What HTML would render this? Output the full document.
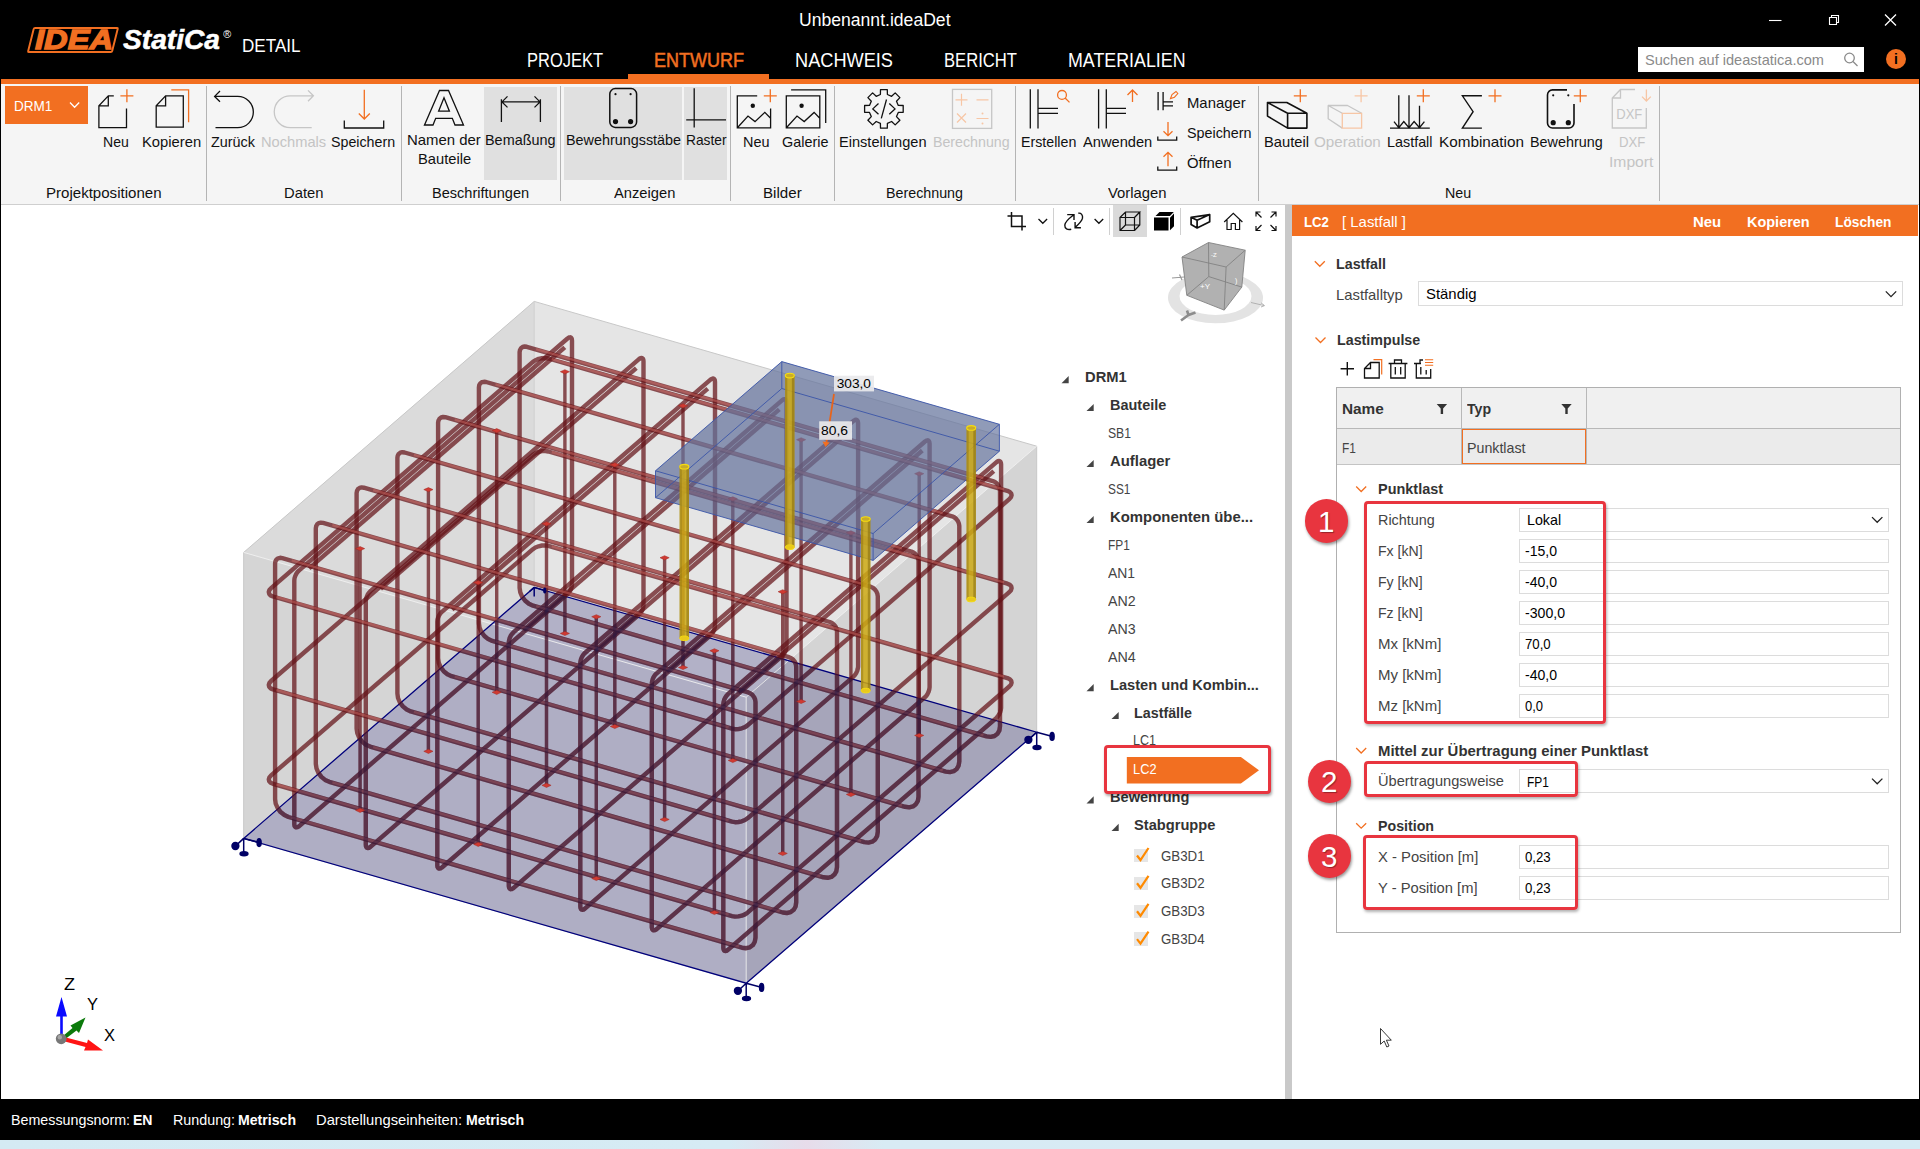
<!DOCTYPE html>
<html lang="de"><head><meta charset="utf-8"><title>IDEA StatiCa Detail</title>
<style>
html,body{margin:0;padding:0;background:#fff;}
body{width:1920px;height:1149px;position:relative;overflow:hidden;font-family:"Liberation Sans",sans-serif;}
.b{position:absolute;display:block;}
.t{position:absolute;display:block;white-space:nowrap;transform-origin:0 50%;}
svg{overflow:visible}
</style></head><body>
<div class="b" style="left:0px;top:205.3px;width:1920px;height:894px;background:#fff;"></div>
<div class="b" style="left:1285px;top:205.3px;width:7px;height:894px;background:#c9c9c9;"></div>
<div class="b" style="left:0px;top:1099px;width:1920px;height:41px;background:#000;"></div>
<div class="b" style="left:0px;top:1140px;width:1920px;height:9px;background:linear-gradient(90deg,#d4eaf3 0%,#d6ebf4 38%,#e7dcea 42%,#d8ebf4 46%,#d5ebf4 100%);"></div>
<span class="t" style="left:11.00px;top:1109.60px;height:20px;line-height:20px;font-size:15px;color:#fff;transform:scaleX(0.9516);">Bemessungsnorm:</span>
<span class="t" style="left:133.00px;top:1109.60px;height:20px;line-height:20px;font-size:15px;color:#fff;font-weight:bold;transform:scaleX(0.9358);">EN</span>
<span class="t" style="left:173.00px;top:1109.60px;height:20px;line-height:20px;font-size:15px;color:#fff;transform:scaleX(0.9531);">Rundung:</span>
<span class="t" style="left:237.50px;top:1109.60px;height:20px;line-height:20px;font-size:15px;color:#fff;font-weight:bold;transform:scaleX(0.9403);">Metrisch</span>
<span class="t" style="left:316.00px;top:1109.60px;height:20px;line-height:20px;font-size:15px;color:#fff;transform:scaleX(0.9837);">Darstellungseinheiten:</span>
<span class="t" style="left:465.50px;top:1109.60px;height:20px;line-height:20px;font-size:15px;color:#fff;font-weight:bold;transform:scaleX(0.9403);">Metrisch</span>
<svg class="b" style="left:0;top:0" width="1920" height="1149" viewBox="0 0 1920 1149"><polygon points="243.7,838.4 746.2,983.2 1036.7,732.2 1036.7,446.2 534.2,301.4 243.7,552.4" fill="#e5e5e5"/><polygon points="243.7,838.4 534.2,587.4 534.2,301.4 243.7,552.4" fill="#dbdbdb"/><polygon points="243.7,838.4 746.2,983.2 746.2,697.2 243.7,552.4" fill="rgba(0,0,0,0.025)"/><polygon points="746.2,983.2 1036.7,732.2 1036.7,446.2 746.2,697.2" fill="rgba(0,0,0,0.075)"/><polygon points="243.7,838.4 746.2,983.2 1036.7,732.2 534.2,587.4" fill="rgba(128,126,170,0.5)"/><path d="M243.7 838.4L746.2 983.2L1036.7 732.2L1036.7 446.2L534.2 301.4L243.7 552.4Z" stroke="#c8c8c8" stroke-width="1" fill="none"/><path d="M534.2 587.4L534.2 301.4" stroke="#cdcdcd" stroke-width="0.8" fill="none"/><path d="M243.7 552.4L746.2 697.2L1036.7 446.2M746.2 697.2L746.2 983.2" stroke="#f0f0f0" stroke-width="0.9" fill="none"/><polygon points="243.7,838.4 746.2,983.2 1036.7,732.2 534.2,587.4" fill="none" stroke="#00007c" stroke-width="1.3"/><polygon points="746.2,983.2 1036.7,732.2 785.0,659.3 746.2,697.2" fill="rgba(0,0,10,0.025)"/><defs><g id="bars" fill="none" stroke-linejoin="round"><path d="M275.1 799.1L275.7 803.7L277.7 808.1L280.6 812.1L284.4 815.1L288.5 817.0L742.0 947.7L746.2 948.2L749.9 947.3L752.9 945.1L754.8 941.7L755.5 937.6L755.5 702.0L755.1 699.5L754.1 697.2L752.5 695.0L750.5 693.4L748.3 692.4L282.3 558.1L280.1 557.8L278.1 558.3L276.5 559.5L275.4 561.3L275.1 563.5Z"/><path d="M315.8 763.9L316.5 768.4L318.4 772.9L321.4 776.9L325.1 779.9L329.3 781.8L782.8 912.5L786.9 913.0L790.7 912.1L793.7 909.8L795.6 906.5L796.2 902.4L796.2 666.7L795.9 664.3L794.9 661.9L793.3 659.8L791.3 658.2L789.0 657.2L323.1 522.9L320.8 522.6L318.8 523.1L317.2 524.3L316.2 526.1L315.8 528.3Z"/><path d="M356.6 728.7L357.3 733.2L359.2 737.7L362.1 741.6L365.9 744.7L370.1 746.6L823.5 877.3L827.7 877.8L831.4 876.9L834.4 874.6L836.3 871.3L837.0 867.1L837.0 631.5L836.6 629.1L835.6 626.7L834.0 624.6L832.0 623.0L829.8 622.0L363.8 487.7L361.6 487.4L359.6 487.9L358.0 489.1L357.0 490.9L356.6 493.1Z"/><path d="M397.4 693.5L398.0 698.0L399.9 702.5L402.9 706.4L406.7 709.5L410.8 711.4L864.3 842.1L868.5 842.6L872.2 841.7L875.2 839.4L877.1 836.1L877.8 831.9L877.8 596.3L877.4 593.9L876.4 591.5L874.8 589.4L872.8 587.7L870.5 586.7L404.6 452.5L402.3 452.2L400.3 452.7L398.7 453.9L397.7 455.7L397.4 457.9Z"/><path d="M438.1 658.3L438.8 662.8L440.7 667.3L443.7 671.2L447.4 674.3L451.6 676.2L905.1 806.8L909.2 807.4L913.0 806.4L915.9 804.2L917.9 800.9L918.5 796.7L918.5 561.1L918.2 558.7L917.1 556.3L915.5 554.2L913.5 552.5L911.3 551.5L445.3 417.2L443.1 417.0L441.1 417.5L439.5 418.7L438.5 420.5L438.1 422.7Z"/><path d="M478.9 623.1L479.5 627.6L481.4 632.0L484.4 636.0L488.2 639.1L492.3 640.9L945.8 771.6L950.0 772.1L953.7 771.2L956.7 769.0L958.6 765.6L959.3 761.5L959.3 525.9L958.9 523.5L957.9 521.1L956.3 519.0L954.3 517.3L952.1 516.3L486.1 382.0L483.9 381.8L481.8 382.2L480.3 383.4L479.2 385.2L478.9 387.5Z"/><path d="M519.6 587.9L520.3 592.4L522.2 596.8L525.2 600.8L528.9 603.8L533.1 605.7L986.6 736.4L990.7 736.9L994.5 736.0L997.5 733.8L999.4 730.4L1000.0 726.3L1000.0 490.7L999.7 488.3L998.6 485.9L997.1 483.7L995.0 482.1L992.8 481.1L526.8 346.8L524.6 346.5L522.6 347.0L521.0 348.2L520.0 350.0L519.6 352.2Z"/><path d="M294.3 824.2L294.5 825.8L295.2 827.0L296.2 827.4L297.4 827.2L298.9 826.3L567.5 594.1L568.9 592.6L570.2 590.7L571.2 588.5L571.8 586.3L572.0 584.2L572.0 340.5L571.8 338.9L571.2 337.8L570.2 337.3L568.9 337.5L567.5 338.5L298.9 570.6L297.4 572.1L296.2 574.0L295.2 576.2L294.5 578.4L294.3 580.5Z"/><path d="M309.1 568.3L564.8 347.4"/><path d="M365.8 844.8L366.0 846.4L366.7 847.6L367.7 848.0L369.0 847.8L370.4 846.9L639.0 614.7L640.4 613.2L641.7 611.3L642.7 609.1L643.3 606.9L643.5 604.8L643.5 361.1L643.3 359.5L642.7 358.4L641.7 357.9L640.4 358.1L639.0 359.1L370.4 591.2L369.0 592.7L367.7 594.6L366.7 596.8L366.0 599.1L365.8 601.1Z"/><path d="M380.6 588.9L636.3 368.1"/><path d="M437.3 865.4L437.5 867.0L438.2 868.2L439.2 868.6L440.5 868.4L441.9 867.5L710.5 635.4L711.9 633.8L713.2 631.9L714.2 629.7L714.8 627.5L715.0 625.4L715.0 381.7L714.8 380.1L714.2 379.0L713.2 378.5L711.9 378.8L710.5 379.7L441.9 611.8L440.5 613.3L439.2 615.2L438.2 617.4L437.5 619.7L437.3 621.7Z"/><path d="M452.1 609.5L707.8 388.7"/><path d="M508.8 886.0L509.1 887.7L509.7 888.8L510.7 889.2L512.0 889.0L513.4 888.1L782.0 656.0L783.4 654.5L784.7 652.5L785.7 650.3L786.3 648.1L786.5 646.0L786.5 402.4L786.3 400.7L785.7 399.6L784.7 399.1L783.4 399.4L782.0 400.3L513.4 632.4L512.0 633.9L510.7 635.8L509.7 638.0L509.1 640.3L508.8 642.3Z"/><path d="M523.6 630.1L779.3 409.3"/><path d="M580.3 906.6L580.6 908.3L581.2 909.4L582.2 909.8L583.5 909.6L584.9 908.7L853.5 676.6L854.9 675.1L856.2 673.1L857.2 670.9L857.8 668.7L858.1 666.6L858.1 423.0L857.8 421.3L857.2 420.2L856.2 419.7L854.9 420.0L853.5 420.9L584.9 653.0L583.5 654.5L582.2 656.4L581.2 658.6L580.6 660.9L580.3 662.9Z"/><path d="M595.1 650.7L850.8 429.9"/><path d="M651.8 927.2L652.1 928.9L652.7 930.0L653.7 930.4L655.0 930.2L656.4 929.3L925.0 697.2L926.4 695.7L927.7 693.7L928.7 691.5L929.3 689.3L929.6 687.2L929.6 443.6L929.3 441.9L928.7 440.8L927.7 440.3L926.4 440.6L925.0 441.5L656.4 673.6L655.0 675.1L653.7 677.0L652.7 679.2L652.1 681.5L651.8 683.5Z"/><path d="M666.6 671.4L922.3 450.5"/><path d="M723.3 947.8L723.6 949.5L724.2 950.6L725.2 951.0L726.5 950.8L727.9 949.9L996.5 717.8L997.9 716.3L999.2 714.3L1000.2 712.1L1000.8 709.9L1001.1 707.9L1001.1 464.2L1000.8 462.5L1000.2 461.4L999.2 460.9L997.9 461.2L996.5 462.1L727.9 694.2L726.5 695.7L725.2 697.7L724.2 699.8L723.6 702.1L723.3 704.1Z"/><path d="M738.2 692.0L993.8 471.1"/><path d="M271.1 775.4L269.4 777.4L268.8 779.3L269.2 781.2L270.6 782.7L273.0 783.8L732.0 916.1L735.0 916.6L738.4 916.4L741.8 915.7L745.0 914.4L747.5 912.7L1009.3 686.5L1011.0 684.6L1011.6 682.6L1011.2 680.7L1009.8 679.2L1007.4 678.1L548.4 545.8L545.4 545.4L542.0 545.5L538.6 546.3L535.4 547.5L532.9 549.2Z"/><path d="M271.1 681.0L269.4 683.0L268.8 685.0L269.2 686.8L270.6 688.4L273.0 689.4L732.0 821.7L735.0 822.2L738.4 822.0L741.8 821.3L745.0 820.0L747.5 818.3L1009.3 592.1L1011.0 590.2L1011.6 588.2L1011.2 586.3L1009.8 584.8L1007.4 583.7L548.4 451.5L545.4 451.0L542.0 451.1L538.6 451.9L535.4 453.2L532.9 454.9Z"/><path d="M271.1 588.1L269.4 590.0L268.8 592.0L269.2 593.9L270.6 595.4L273.0 596.5L732.0 728.7L735.0 729.2L738.4 729.1L741.8 728.3L745.0 727.1L747.5 725.4L1009.3 499.2L1011.0 497.2L1011.6 495.2L1011.2 493.4L1009.8 491.9L1007.4 490.8L548.4 358.5L545.4 358.0L542.0 358.2L538.6 358.9L535.4 360.2L532.9 361.9Z"/><path d="M360.1 810.3L360.1 548.6" stroke-width="3.4"/><path d="M428.4 751.3L428.4 489.6" stroke-width="3.4"/><path d="M496.7 692.3L496.7 430.6" stroke-width="3.4"/><path d="M564.9 633.4L564.9 371.7" stroke-width="3.4"/><path d="M478.2 844.3L478.2 582.6" stroke-width="3.4"/><path d="M546.5 785.3L546.5 523.7" stroke-width="3.4"/><path d="M614.8 726.4L614.8 464.7" stroke-width="3.4"/><path d="M683.0 667.4L683.0 405.7" stroke-width="3.4"/><path d="M596.3 878.4L596.3 616.7" stroke-width="3.4"/><path d="M664.6 819.4L664.6 557.7" stroke-width="3.4"/><path d="M732.8 760.4L732.8 498.7" stroke-width="3.4"/><path d="M801.1 701.4L801.1 439.7" stroke-width="3.4"/><path d="M714.4 912.4L714.4 650.7" stroke-width="3.4"/><path d="M782.7 853.4L782.7 591.7" stroke-width="3.4"/><path d="M850.9 794.4L850.9 532.7" stroke-width="3.4"/><path d="M919.2 735.4L919.2 473.7" stroke-width="3.4"/></g><clipPath id="plclip"><polygon points="243.7,838.4 746.2,983.2 1036.7,732.2 534.2,587.4"/></clipPath></defs><use href="#bars" stroke="rgba(100,18,24,0.72)" stroke-width="4.4"/><path d="M291.7 817.9L738.9 946.8M291.7 560.8L738.9 689.7M332.4 782.7L779.7 911.6M332.4 525.6L779.7 654.5M373.2 747.5L820.4 876.4M373.2 490.4L820.4 619.3M413.9 712.3L861.2 841.2M413.9 455.2L861.2 584.0M454.7 677.1L901.9 805.9M454.7 420.0L901.9 548.8M495.5 641.8L942.7 770.7M495.5 384.7L942.7 513.6M536.2 606.6L983.4 735.5M536.2 349.5L983.4 478.4M276.4 784.8L728.6 915.1M551.8 546.8L1004.0 677.1M276.4 690.4L728.6 820.7M551.8 452.4L1004.0 582.8M276.4 597.4L728.6 727.8M551.8 359.5L1004.0 489.8" stroke="rgba(225,120,110,0.42)" stroke-width="2.4" fill="none" transform="translate(0,-0.4)"/><g clip-path="url(#plclip)"><use href="#bars" stroke="rgba(30,30,78,0.30)" stroke-width="4.4"/></g><g fill="#cf3a32" stroke="#a02822" stroke-width="0.5"><path d="M355.5 810.3l4.6 -2l4.6 2l-4.6 2.2z"/><path d="M355.5 548.6l4.6 -2l4.6 2l-4.6 2.2z"/><path d="M423.8 751.3l4.6 -2l4.6 2l-4.6 2.2z"/><path d="M423.8 489.6l4.6 -2l4.6 2l-4.6 2.2z"/><path d="M492.1 692.3l4.6 -2l4.6 2l-4.6 2.2z"/><path d="M492.1 430.6l4.6 -2l4.6 2l-4.6 2.2z"/><path d="M560.3 633.4l4.6 -2l4.6 2l-4.6 2.2z"/><path d="M560.3 371.7l4.6 -2l4.6 2l-4.6 2.2z"/><path d="M473.6 844.3l4.6 -2l4.6 2l-4.6 2.2z"/><path d="M473.6 582.6l4.6 -2l4.6 2l-4.6 2.2z"/><path d="M541.9 785.3l4.6 -2l4.6 2l-4.6 2.2z"/><path d="M541.9 523.7l4.6 -2l4.6 2l-4.6 2.2z"/><path d="M610.2 726.4l4.6 -2l4.6 2l-4.6 2.2z"/><path d="M610.2 464.7l4.6 -2l4.6 2l-4.6 2.2z"/><path d="M678.4 667.4l4.6 -2l4.6 2l-4.6 2.2z"/><path d="M678.4 405.7l4.6 -2l4.6 2l-4.6 2.2z"/><path d="M591.7 878.4l4.6 -2l4.6 2l-4.6 2.2z"/><path d="M591.7 616.7l4.6 -2l4.6 2l-4.6 2.2z"/><path d="M660.0 819.4l4.6 -2l4.6 2l-4.6 2.2z"/><path d="M660.0 557.7l4.6 -2l4.6 2l-4.6 2.2z"/><path d="M728.2 760.4l4.6 -2l4.6 2l-4.6 2.2z"/><path d="M728.2 498.7l4.6 -2l4.6 2l-4.6 2.2z"/><path d="M796.5 701.4l4.6 -2l4.6 2l-4.6 2.2z"/><path d="M796.5 439.7l4.6 -2l4.6 2l-4.6 2.2z"/><path d="M709.8 912.4l4.6 -2l4.6 2l-4.6 2.2z"/><path d="M709.8 650.7l4.6 -2l4.6 2l-4.6 2.2z"/><path d="M778.1 853.4l4.6 -2l4.6 2l-4.6 2.2z"/><path d="M778.1 591.7l4.6 -2l4.6 2l-4.6 2.2z"/><path d="M846.3 794.4l4.6 -2l4.6 2l-4.6 2.2z"/><path d="M846.3 532.7l4.6 -2l4.6 2l-4.6 2.2z"/><path d="M914.6 735.4l4.6 -2l4.6 2l-4.6 2.2z"/><path d="M914.6 473.7l4.6 -2l4.6 2l-4.6 2.2z"/></g><polygon points="655.5,497.7 873.1,560.4 999.4,451.2 999.4,424.3 781.8,361.6 655.5,470.8" fill="rgba(90,106,152,0.64)"/><polygon points="655.5,470.8 873.1,533.5 999.4,424.3 781.8,361.6" fill="rgba(125,135,170,0.22)"/><path d="M655.5 497.7L873.1 560.4L999.4 451.2L999.4 424.3L781.8 361.6L655.5 470.8ZM655.5 470.8L873.1 533.5L999.4 424.3M873.1 533.5L873.1 560.4M655.5 497.7L781.8 388.5L999.4 451.2M781.8 388.5L781.8 361.6" stroke="#3a55a8" stroke-width="0.9" fill="none"/><rect x="785.1" y="375.6" width="9.4" height="171.6" fill="rgba(205,170,22,0.86)"/><rect x="785.1" y="375.6" width="2.2" height="171.6" fill="rgba(120,95,10,0.35)"/><rect x="791.9" y="375.6" width="2.6" height="171.6" fill="rgba(120,95,10,0.45)"/><ellipse cx="789.8" cy="547.2" rx="4.5" ry="2.3" fill="#e9c81c" stroke="#f5dc10" stroke-width="1"/><ellipse cx="789.8" cy="375.6" rx="4.5" ry="2.3" fill="#c9ac28" stroke="#f5dc10" stroke-width="1.1"/><rect x="679.6" y="466.7" width="9.4" height="171.6" fill="rgba(205,170,22,0.86)"/><rect x="679.6" y="466.7" width="2.2" height="171.6" fill="rgba(120,95,10,0.35)"/><rect x="686.4" y="466.7" width="2.6" height="171.6" fill="rgba(120,95,10,0.45)"/><ellipse cx="684.3" cy="638.3" rx="4.5" ry="2.3" fill="#e9c81c" stroke="#f5dc10" stroke-width="1"/><ellipse cx="684.3" cy="466.7" rx="4.5" ry="2.3" fill="#c9ac28" stroke="#f5dc10" stroke-width="1.1"/><rect x="966.5" y="427.9" width="9.4" height="171.6" fill="rgba(205,170,22,0.86)"/><rect x="966.5" y="427.9" width="2.2" height="171.6" fill="rgba(120,95,10,0.35)"/><rect x="973.3" y="427.9" width="2.6" height="171.6" fill="rgba(120,95,10,0.45)"/><ellipse cx="971.2" cy="599.5" rx="4.5" ry="2.3" fill="#e9c81c" stroke="#f5dc10" stroke-width="1"/><ellipse cx="971.2" cy="427.9" rx="4.5" ry="2.3" fill="#c9ac28" stroke="#f5dc10" stroke-width="1.1"/><rect x="861.0" y="519.0" width="9.4" height="171.6" fill="rgba(205,170,22,0.86)"/><rect x="861.0" y="519.0" width="2.2" height="171.6" fill="rgba(120,95,10,0.35)"/><rect x="867.8" y="519.0" width="2.6" height="171.6" fill="rgba(120,95,10,0.45)"/><ellipse cx="865.7" cy="690.6" rx="4.5" ry="2.3" fill="#e9c81c" stroke="#f5dc10" stroke-width="1"/><ellipse cx="865.7" cy="519.0" rx="4.5" ry="2.3" fill="#c9ac28" stroke="#f5dc10" stroke-width="1.1"/><g stroke="#000066" stroke-width="1.5" fill="#000066"><path d="M243.7 838.4V851.8M243.7 838.4L236.7 844.9M243.7 838.4L257.7 842.1" fill="none"/><ellipse cx="244.0" cy="853.7" rx="3.9" ry="2"/><circle cx="235.4" cy="846.0" r="3.4"/><ellipse cx="259.1" cy="842.6" rx="2" ry="3.9"/></g><g stroke="#000066" stroke-width="1.5" fill="#000066"><path d="M746.2 983.2V996.6M746.2 983.2L739.2 989.7M746.2 983.2L760.2 986.9" fill="none"/><ellipse cx="746.5" cy="998.5" rx="3.9" ry="2"/><circle cx="737.9" cy="990.8" r="3.4"/><ellipse cx="761.6" cy="987.4" rx="2" ry="3.9"/></g><g stroke="#000066" stroke-width="1.5" fill="#000066"><path d="M1036.7 732.2V745.6M1036.7 732.2L1029.7 738.7M1036.7 732.2L1050.7 735.9" fill="none"/><ellipse cx="1037.0" cy="747.5" rx="3.9" ry="2"/><circle cx="1028.4" cy="739.8" r="3.4"/><ellipse cx="1052.1" cy="736.4" rx="2" ry="3.9"/></g><path d="M534.2 587.4v9M534.2 587.4l9 2.6M534.2 587.4l-5 4.4" stroke="#000070" stroke-width="1.5" fill="none"/><ellipse cx="544.7" cy="590.6" rx="1.6" ry="3" fill="#000066"/><path d="M834 394L826.2 444" stroke="#e8641a" stroke-width="1.7"/><path d="M822.5 441.5l3 5.5l4.2 -4.6z" fill="#f26f21"/><rect x="834" y="375.7" width="40" height="15.7" fill="rgba(233,233,236,0.92)"/><rect x="819.2" y="421.3" width="32.8" height="18.5" fill="rgba(233,233,236,0.92)"/><text x="836.7" y="388.3" font-family="Liberation Sans, sans-serif" font-size="13.5" fill="#000" textLength="34.3" lengthAdjust="spacingAndGlyphs">303,0</text><text x="821" y="435.3" font-family="Liberation Sans, sans-serif" font-size="13.5" fill="#000" textLength="27" lengthAdjust="spacingAndGlyphs">80,6</text></svg>
<div class="b" style="left:0px;top:0px;width:1920px;height:79px;background:#000;"></div>
<div class="b" style="left:0px;top:79px;width:1920px;height:5px;background:#f26f21;"></div>
<div class="b" style="left:628px;top:74px;width:141px;height:6px;background:#f26f21;"></div>
<span class="t" style="left:798.50px;top:8.50px;height:23px;line-height:23px;font-size:17.5px;color:#fff;transform:scaleX(1.0047);">Unbenannt.ideaDet</span>
<div class="b" style="left:29.5px;top:27px;width:86px;height:25.5px;border:2px solid #f26f21;box-sizing:border-box;transform:skewX(-14deg);border-radius:2px"></div>
<span class="t" style="left:34.50px;top:22.30px;height:36px;line-height:36px;font-size:27.5px;color:#f26f21;font-weight:bold;font-style:italic;transform:scaleX(1.1872);-webkit-text-stroke:1.3px #f26f21;">IDEA</span>
<span class="t" style="left:122.50px;top:22.50px;height:35px;line-height:35px;font-size:27px;color:#fff;font-weight:bold;font-style:italic;transform:scaleX(1.0428);-webkit-text-stroke:0.5px #fff;">StatiCa</span>
<span class="t" style="left:222.50px;top:27.00px;height:14px;line-height:14px;font-size:11px;color:#fff;font-style:italic;transform:scaleX(0.9870);">®</span>
<span class="t" style="left:242.00px;top:32.70px;height:25px;line-height:25px;font-size:19px;color:#fff;transform:scaleX(0.8985);">DETAIL</span>
<span class="t" style="left:526.50px;top:47.80px;height:25px;line-height:25px;font-size:19.5px;color:#fff;transform:scaleX(0.8451);">PROJEKT</span>
<span class="t" style="left:653.50px;top:47.80px;height:25px;line-height:25px;font-size:19.5px;color:#f26f21;transform:scaleX(0.9233);-webkit-text-stroke:0.5px #f26f21;">ENTWURF</span>
<span class="t" style="left:794.50px;top:47.80px;height:25px;line-height:25px;font-size:19.5px;color:#fff;transform:scaleX(0.9325);">NACHWEIS</span>
<span class="t" style="left:943.50px;top:47.80px;height:25px;line-height:25px;font-size:19.5px;color:#fff;transform:scaleX(0.8529);">BERICHT</span>
<span class="t" style="left:1067.50px;top:47.80px;height:25px;line-height:25px;font-size:19.5px;color:#fff;transform:scaleX(0.9138);">MATERIALIEN</span>
<div class="b" style="left:1638px;top:47px;width:225.5px;height:25px;background:#fff;"></div>
<span class="t" style="left:1645.00px;top:49.50px;height:20px;line-height:20px;font-size:15px;color:#8a8a8a;transform:scaleX(0.9714);">Suchen auf ideastatica.com</span>
<div class="b" style="left:1886px;top:49px;width:20px;height:20px;border-radius:50%;background:#f26f21"></div>
<span class="t" style="left:1894.08px;top:50.30px;height:18px;line-height:18px;font-size:14px;color:#000;font-weight:bold;transform:scaleX(0.9850);">i</span>
<div class="b" style="left:0px;top:84px;width:1920px;height:120px;background:#f5f5f5;"></div>
<div class="b" style="left:0px;top:204px;width:1920px;height:1.3px;background:#cfcfcf;"></div>
<div class="b" style="left:484.2px;top:87px;width:72.7px;height:92.5px;background:#e0e0e0;"></div>
<div class="b" style="left:564.1px;top:87px;width:117.7px;height:92.5px;background:#e0e0e0;"></div>
<div class="b" style="left:684px;top:87px;width:43.1px;height:92.5px;background:#e0e0e0;"></div>
<div class="b" style="left:205.7px;top:86px;width:1.2px;height:114.5px;background:#b4b4b4;"></div>
<div class="b" style="left:401px;top:86px;width:1.2px;height:114.5px;background:#b4b4b4;"></div>
<div class="b" style="left:559.8px;top:86px;width:1.2px;height:114.5px;background:#b4b4b4;"></div>
<div class="b" style="left:729.7px;top:86px;width:1.2px;height:114.5px;background:#b4b4b4;"></div>
<div class="b" style="left:833.6px;top:86px;width:1.2px;height:114.5px;background:#b4b4b4;"></div>
<div class="b" style="left:1014.8px;top:86px;width:1.2px;height:114.5px;background:#b4b4b4;"></div>
<div class="b" style="left:1257.9px;top:86px;width:1.2px;height:114.5px;background:#b4b4b4;"></div>
<div class="b" style="left:1658.9px;top:86px;width:1.2px;height:114.5px;background:#b4b4b4;"></div>
<div class="b" style="left:4.8px;top:86px;width:83.2px;height:38px;background:#f26f21;"></div>
<span class="t" style="left:13.70px;top:95.50px;height:20px;line-height:20px;font-size:15.3px;color:#fff;transform:scaleX(0.8858);">DRM1</span>
<span class="t" style="left:102.80px;top:131.90px;height:20px;line-height:20px;font-size:15px;color:#111;transform:scaleX(0.9376);">Neu</span>
<span class="t" style="left:141.50px;top:131.90px;height:20px;line-height:20px;font-size:15px;color:#111;transform:scaleX(0.9843);">Kopieren</span>
<span class="t" style="left:211.00px;top:131.90px;height:20px;line-height:20px;font-size:15px;color:#111;transform:scaleX(0.9599);">Zurück</span>
<span class="t" style="left:260.80px;top:131.90px;height:20px;line-height:20px;font-size:15px;color:#c4c4c4;transform:scaleX(0.9777);">Nochmals</span>
<span class="t" style="left:331.40px;top:131.90px;height:20px;line-height:20px;font-size:15px;color:#111;transform:scaleX(0.9491);">Speichern</span>
<span class="t" style="left:407.20px;top:129.60px;height:20px;line-height:20px;font-size:15px;color:#111;transform:scaleX(0.9947);">Namen der</span>
<span class="t" style="left:417.50px;top:149.40px;height:20px;line-height:20px;font-size:15px;color:#111;transform:scaleX(0.9815);">Bauteile</span>
<span class="t" style="left:485.30px;top:129.60px;height:20px;line-height:20px;font-size:15px;color:#111;transform:scaleX(0.9609);">Bemaßung</span>
<span class="t" style="left:565.60px;top:129.60px;height:20px;line-height:20px;font-size:15px;color:#111;transform:scaleX(0.9586);">Bewehrungsstäbe</span>
<span class="t" style="left:685.50px;top:129.60px;height:20px;line-height:20px;font-size:15px;color:#111;transform:scaleX(0.9168);">Raster</span>
<span class="t" style="left:743.40px;top:131.90px;height:20px;line-height:20px;font-size:15px;color:#111;transform:scaleX(0.9631);">Neu</span>
<span class="t" style="left:782.30px;top:131.90px;height:20px;line-height:20px;font-size:15px;color:#111;transform:scaleX(0.9596);">Galerie</span>
<span class="t" style="left:839.20px;top:131.90px;height:20px;line-height:20px;font-size:15px;color:#111;transform:scaleX(0.9716);">Einstellungen</span>
<span class="t" style="left:932.60px;top:131.90px;height:20px;line-height:20px;font-size:15px;color:#c4c4c4;transform:scaleX(0.9470);">Berechnung</span>
<span class="t" style="left:1021.40px;top:131.90px;height:20px;line-height:20px;font-size:15px;color:#111;transform:scaleX(0.9476);">Erstellen</span>
<span class="t" style="left:1082.60px;top:131.90px;height:20px;line-height:20px;font-size:15px;color:#111;transform:scaleX(0.9762);">Anwenden</span>
<span class="t" style="left:1187.20px;top:93.00px;height:20px;line-height:20px;font-size:15px;color:#111;transform:scaleX(0.9899);">Manager</span>
<span class="t" style="left:1187.20px;top:122.90px;height:20px;line-height:20px;font-size:15px;color:#111;transform:scaleX(0.9550);">Speichern</span>
<span class="t" style="left:1187.20px;top:152.70px;height:20px;line-height:20px;font-size:15px;color:#111;transform:scaleX(0.9921);">Öffnen</span>
<span class="t" style="left:1263.60px;top:131.90px;height:20px;line-height:20px;font-size:15px;color:#111;transform:scaleX(0.9812);">Bauteil</span>
<span class="t" style="left:1314.00px;top:131.90px;height:20px;line-height:20px;font-size:15px;color:#c4c4c4;transform:scaleX(1.0141);">Operation</span>
<span class="t" style="left:1386.70px;top:131.90px;height:20px;line-height:20px;font-size:15px;color:#111;transform:scaleX(0.9574);">Lastfall</span>
<span class="t" style="left:1438.60px;top:131.90px;height:20px;line-height:20px;font-size:15px;color:#111;transform:scaleX(1.0182);">Kombination</span>
<span class="t" style="left:1529.60px;top:131.90px;height:20px;line-height:20px;font-size:15px;color:#111;transform:scaleX(0.9568);">Bewehrung</span>
<span class="t" style="left:1618.60px;top:131.90px;height:20px;line-height:20px;font-size:15px;color:#c4c4c4;transform:scaleX(0.8767);">DXF</span>
<span class="t" style="left:1609.20px;top:152.00px;height:20px;line-height:20px;font-size:15px;color:#c4c4c4;transform:scaleX(1.0446);">Import</span>
<span class="t" style="left:46.40px;top:182.70px;height:20px;line-height:20px;font-size:15px;color:#111;transform:scaleX(1.0038);">Projektpositionen</span>
<span class="t" style="left:284.40px;top:182.70px;height:20px;line-height:20px;font-size:15px;color:#111;transform:scaleX(0.9844);">Daten</span>
<span class="t" style="left:432.40px;top:182.70px;height:20px;line-height:20px;font-size:15px;color:#111;transform:scaleX(0.9704);">Beschriftungen</span>
<span class="t" style="left:614.40px;top:182.70px;height:20px;line-height:20px;font-size:15px;color:#111;transform:scaleX(0.9801);">Anzeigen</span>
<span class="t" style="left:763.30px;top:182.70px;height:20px;line-height:20px;font-size:15px;color:#111;transform:scaleX(1.0092);">Bilder</span>
<span class="t" style="left:886.30px;top:182.70px;height:20px;line-height:20px;font-size:15px;color:#111;transform:scaleX(0.9519);">Berechnung</span>
<span class="t" style="left:1108.40px;top:182.70px;height:20px;line-height:20px;font-size:15px;color:#111;transform:scaleX(0.9880);">Vorlagen</span>
<span class="t" style="left:1445.40px;top:182.70px;height:20px;line-height:20px;font-size:15px;color:#111;transform:scaleX(0.9522);">Neu</span>
<div class="b" style="left:1113.1px;top:205.4px;width:33.5px;height:32px;background:#dadada;"></div>
<div class="b" style="left:1052.8px;top:208px;width:1.2px;height:27px;background:#d0d0d0;"></div>
<div class="b" style="left:1109.1px;top:208px;width:1.2px;height:27px;background:#d0d0d0;"></div>
<div class="b" style="left:1180.1px;top:208px;width:1.2px;height:27px;background:#d0d0d0;"></div>
<span class="t" style="left:1084.50px;top:366.70px;height:20px;line-height:20px;font-size:15.5px;color:#333;font-weight:bold;transform:scaleX(0.9495);">DRM1</span>
<span class="t" style="left:1109.50px;top:394.60px;height:20px;line-height:20px;font-size:15px;color:#333;font-weight:bold;transform:scaleX(0.9649);">Bauteile</span>
<span class="t" style="left:1108.40px;top:422.70px;height:20px;line-height:20px;font-size:15px;color:#444;transform:scaleX(0.8112);">SB1</span>
<span class="t" style="left:1109.50px;top:450.60px;height:20px;line-height:20px;font-size:15px;color:#333;font-weight:bold;transform:scaleX(0.9911);">Auflager</span>
<span class="t" style="left:1108.40px;top:478.80px;height:20px;line-height:20px;font-size:15px;color:#444;transform:scaleX(0.7901);">SS1</span>
<span class="t" style="left:1109.50px;top:506.60px;height:20px;line-height:20px;font-size:15px;color:#333;font-weight:bold;transform:scaleX(0.9927);">Komponenten übe...</span>
<span class="t" style="left:1108.40px;top:534.80px;height:20px;line-height:20px;font-size:15px;color:#444;transform:scaleX(0.7925);">FP1</span>
<span class="t" style="left:1108.40px;top:562.60px;height:20px;line-height:20px;font-size:15px;color:#444;transform:scaleX(0.9253);">AN1</span>
<span class="t" style="left:1108.40px;top:590.70px;height:20px;line-height:20px;font-size:15px;color:#444;transform:scaleX(0.9459);">AN2</span>
<span class="t" style="left:1108.40px;top:618.60px;height:20px;line-height:20px;font-size:15px;color:#444;transform:scaleX(0.9459);">AN3</span>
<span class="t" style="left:1108.40px;top:646.70px;height:20px;line-height:20px;font-size:15px;color:#444;transform:scaleX(0.9527);">AN4</span>
<span class="t" style="left:1109.50px;top:674.80px;height:20px;line-height:20px;font-size:15px;color:#333;font-weight:bold;transform:scaleX(0.9765);">Lasten und Kombin...</span>
<span class="t" style="left:1134.40px;top:702.60px;height:20px;line-height:20px;font-size:15px;color:#333;font-weight:bold;transform:scaleX(0.9532);">Lastfälle</span>
<span class="t" style="left:1133.00px;top:730.40px;height:20px;line-height:20px;font-size:15px;color:#444;transform:scaleX(0.8359);">LC1</span>
<span class="t" style="left:1109.50px;top:787.00px;height:20px;line-height:20px;font-size:15px;color:#333;font-weight:bold;transform:scaleX(0.9722);">Bewehrung</span>
<span class="t" style="left:1134.40px;top:814.50px;height:20px;line-height:20px;font-size:15px;color:#333;font-weight:bold;transform:scaleX(0.9768);">Stabgruppe</span>
<div class="b" style="left:1134.4px;top:848.7px;width:13.5px;height:13.5px;background:#e6e6e6;"></div>
<span class="t" style="left:1161.40px;top:845.50px;height:20px;line-height:20px;font-size:15px;color:#444;transform:scaleX(0.8864);">GB3D1</span>
<div class="b" style="left:1134.4px;top:876.5px;width:13.5px;height:13.5px;background:#e6e6e6;"></div>
<span class="t" style="left:1161.40px;top:873.30px;height:20px;line-height:20px;font-size:15px;color:#444;transform:scaleX(0.8864);">GB3D2</span>
<div class="b" style="left:1134.4px;top:904.5px;width:13.5px;height:13.5px;background:#e6e6e6;"></div>
<span class="t" style="left:1161.40px;top:901.30px;height:20px;line-height:20px;font-size:15px;color:#444;transform:scaleX(0.8864);">GB3D3</span>
<div class="b" style="left:1134.4px;top:932.3px;width:13.5px;height:13.5px;background:#e6e6e6;"></div>
<span class="t" style="left:1161.40px;top:929.10px;height:20px;line-height:20px;font-size:15px;color:#444;transform:scaleX(0.8864);">GB3D4</span>
<span class="t" style="left:63.50px;top:973.50px;height:22px;line-height:22px;font-size:17px;color:#000;transform:scaleX(1.0594);">Z</span>
<span class="t" style="left:86.50px;top:993.50px;height:22px;line-height:22px;font-size:17px;color:#000;transform:scaleX(0.9701);">Y</span>
<span class="t" style="left:104.00px;top:1024.80px;height:22px;line-height:22px;font-size:17px;color:#000;transform:scaleX(0.9701);">X</span>
<div class="b" style="left:1292px;top:205.2px;width:626px;height:30.6px;background:#f26f21;"></div>
<span class="t" style="left:1304.40px;top:211.80px;height:20px;line-height:20px;font-size:15px;color:#fff;font-weight:bold;transform:scaleX(0.8787);">LC2</span>
<span class="t" style="left:1342.30px;top:211.80px;height:20px;line-height:20px;font-size:15px;color:#fff;transform:scaleX(0.9954);">[ Lastfall ]</span>
<span class="t" style="left:1693.30px;top:211.80px;height:20px;line-height:20px;font-size:15px;color:#fff;font-weight:bold;transform:scaleX(0.9952);">Neu</span>
<span class="t" style="left:1747.30px;top:211.80px;height:20px;line-height:20px;font-size:15px;color:#fff;font-weight:bold;transform:scaleX(0.9645);">Kopieren</span>
<span class="t" style="left:1835.40px;top:211.80px;height:20px;line-height:20px;font-size:15px;color:#fff;font-weight:bold;transform:scaleX(0.9145);">Löschen</span>
<span class="t" style="left:1335.70px;top:254.00px;height:20px;line-height:20px;font-size:15px;color:#333;font-weight:bold;transform:scaleX(0.9522);">Lastfall</span>
<span class="t" style="left:1335.70px;top:284.90px;height:20px;line-height:20px;font-size:15px;color:#444;transform:scaleX(0.9877);">Lastfalltyp</span>
<div class="b" style="left:1418px;top:281.3px;width:484.6px;height:24.4px;background:#fff;border:1px solid #dcdcdc;box-sizing:border-box;"></div>
<span class="t" style="left:1426.20px;top:284.00px;height:20px;line-height:20px;font-size:15px;color:#000;transform:scaleX(0.9927);">Ständig</span>
<span class="t" style="left:1336.60px;top:330.10px;height:20px;line-height:20px;font-size:15px;color:#333;font-weight:bold;transform:scaleX(0.9507);">Lastimpulse</span>
<div class="b" style="left:1336.4px;top:387.3px;width:565.1px;height:545.3px;background:#fff;border:1px solid #b0b0b0;box-sizing:border-box;"></div>
<div class="b" style="left:1337.4px;top:388.3px;width:563.1px;height:40px;background:#f0f0f0;"></div>
<div class="b" style="left:1337.4px;top:428.3px;width:563.1px;height:1px;background:#b8b8b8;"></div>
<div class="b" style="left:1337.4px;top:429.3px;width:563.1px;height:34.7px;background:#ebebeb;"></div>
<div class="b" style="left:1337.4px;top:464px;width:563.1px;height:1px;background:#c4c4c4;"></div>
<div class="b" style="left:1461px;top:388.3px;width:1px;height:76px;background:#b8b8b8;"></div>
<div class="b" style="left:1586px;top:388.3px;width:1px;height:76px;background:#b8b8b8;"></div>
<div class="b" style="left:1461.5px;top:429px;width:124.5px;height:35.3px;border:1px solid #f26f21;box-sizing:border-box;"></div>
<span class="t" style="left:1342.00px;top:398.90px;height:20px;line-height:20px;font-size:15px;color:#333;font-weight:bold;transform:scaleX(1.0232);">Name</span>
<span class="t" style="left:1467.30px;top:398.90px;height:20px;line-height:20px;font-size:15px;color:#333;font-weight:bold;transform:scaleX(0.9432);">Typ</span>
<span class="t" style="left:1342.00px;top:437.90px;height:20px;line-height:20px;font-size:15px;color:#444;transform:scaleX(0.7941);">F1</span>
<span class="t" style="left:1467.30px;top:437.90px;height:20px;line-height:20px;font-size:15px;color:#444;transform:scaleX(0.9482);">Punktlast</span>
<span class="t" style="left:1377.50px;top:479.00px;height:20px;line-height:20px;font-size:15px;color:#333;font-weight:bold;transform:scaleX(0.9643);">Punktlast</span>
<span class="t" style="left:1377.50px;top:509.50px;height:20px;line-height:20px;font-size:15px;color:#444;transform:scaleX(0.9578);">Richtung</span>
<div class="b" style="left:1519.2px;top:507.5px;width:369.4px;height:24.2px;background:#fff;border:1px solid #dcdcdc;box-sizing:border-box;"></div>
<span class="t" style="left:1527.20px;top:510.00px;height:20px;line-height:20px;font-size:15px;color:#000;transform:scaleX(0.9510);">Lokal</span>
<span class="t" style="left:1377.50px;top:540.80px;height:20px;line-height:20px;font-size:15px;color:#444;transform:scaleX(0.9390);">Fx [kN]</span>
<div class="b" style="left:1519.2px;top:538.8px;width:369.4px;height:24.2px;background:#fff;border:1px solid #dcdcdc;box-sizing:border-box;"></div>
<span class="t" style="left:1524.80px;top:541.30px;height:20px;line-height:20px;font-size:15px;color:#000;transform:scaleX(0.9361);">-15,0</span>
<span class="t" style="left:1377.50px;top:571.70px;height:20px;line-height:20px;font-size:15px;color:#444;transform:scaleX(0.9390);">Fy [kN]</span>
<div class="b" style="left:1519.2px;top:569.7px;width:369.4px;height:24.2px;background:#fff;border:1px solid #dcdcdc;box-sizing:border-box;"></div>
<span class="t" style="left:1524.80px;top:572.20px;height:20px;line-height:20px;font-size:15px;color:#000;transform:scaleX(0.9361);">-40,0</span>
<span class="t" style="left:1377.50px;top:602.70px;height:20px;line-height:20px;font-size:15px;color:#444;transform:scaleX(0.9390);">Fz [kN]</span>
<div class="b" style="left:1519.2px;top:600.7px;width:369.4px;height:24.2px;background:#fff;border:1px solid #dcdcdc;box-sizing:border-box;"></div>
<span class="t" style="left:1524.80px;top:603.20px;height:20px;line-height:20px;font-size:15px;color:#000;transform:scaleX(0.9406);">-300,0</span>
<span class="t" style="left:1377.50px;top:633.70px;height:20px;line-height:20px;font-size:15px;color:#444;transform:scaleX(1.0012);">Mx [kNm]</span>
<div class="b" style="left:1519.2px;top:631.7px;width:369.4px;height:24.2px;background:#fff;border:1px solid #dcdcdc;box-sizing:border-box;"></div>
<span class="t" style="left:1524.80px;top:634.20px;height:20px;line-height:20px;font-size:15px;color:#000;transform:scaleX(0.8804);">70,0</span>
<span class="t" style="left:1377.50px;top:664.70px;height:20px;line-height:20px;font-size:15px;color:#444;transform:scaleX(1.0012);">My [kNm]</span>
<div class="b" style="left:1519.2px;top:662.7px;width:369.4px;height:24.2px;background:#fff;border:1px solid #dcdcdc;box-sizing:border-box;"></div>
<span class="t" style="left:1524.80px;top:665.20px;height:20px;line-height:20px;font-size:15px;color:#000;transform:scaleX(0.9361);">-40,0</span>
<span class="t" style="left:1377.50px;top:695.70px;height:20px;line-height:20px;font-size:15px;color:#444;transform:scaleX(1.0012);">Mz [kNm]</span>
<div class="b" style="left:1519.2px;top:693.7px;width:369.4px;height:24.2px;background:#fff;border:1px solid #dcdcdc;box-sizing:border-box;"></div>
<span class="t" style="left:1524.80px;top:696.20px;height:20px;line-height:20px;font-size:15px;color:#000;transform:scaleX(0.8681);">0,0</span>
<span class="t" style="left:1377.50px;top:740.50px;height:20px;line-height:20px;font-size:15px;color:#333;font-weight:bold;transform:scaleX(0.9945);">Mittel zur Übertragung einer Punktlast</span>
<span class="t" style="left:1377.50px;top:771.00px;height:20px;line-height:20px;font-size:15px;color:#444;transform:scaleX(0.9750);">Übertragungsweise</span>
<div class="b" style="left:1519.2px;top:769px;width:369.4px;height:24.2px;background:#fff;border:1px solid #dcdcdc;box-sizing:border-box;"></div>
<span class="t" style="left:1527.20px;top:771.50px;height:20px;line-height:20px;font-size:15px;color:#000;transform:scaleX(0.7961);">FP1</span>
<span class="t" style="left:1377.50px;top:815.70px;height:20px;line-height:20px;font-size:15px;color:#333;font-weight:bold;transform:scaleX(0.9466);">Position</span>
<span class="t" style="left:1377.50px;top:846.80px;height:20px;line-height:20px;font-size:15px;color:#444;transform:scaleX(0.9863);">X - Position [m]</span>
<div class="b" style="left:1519.2px;top:844.8px;width:369.4px;height:24.2px;background:#fff;border:1px solid #dcdcdc;box-sizing:border-box;"></div>
<span class="t" style="left:1524.80px;top:847.30px;height:20px;line-height:20px;font-size:15px;color:#000;transform:scaleX(0.8804);">0,23</span>
<span class="t" style="left:1377.50px;top:877.80px;height:20px;line-height:20px;font-size:15px;color:#444;transform:scaleX(0.9811);">Y - Position [m]</span>
<div class="b" style="left:1519.2px;top:875.8px;width:369.4px;height:24.2px;background:#fff;border:1px solid #dcdcdc;box-sizing:border-box;"></div>
<span class="t" style="left:1524.80px;top:878.30px;height:20px;line-height:20px;font-size:15px;color:#000;transform:scaleX(0.8804);">0,23</span>
<div class="b" style="left:1363.6px;top:501.2px;width:242px;height:222.4px;border:3px solid #e8353f;border-radius:4px;box-sizing:border-box;box-shadow:1px 2px 3px rgba(0,0,0,.3);"></div>
<div class="b" style="left:1364.3px;top:761.3px;width:214.1px;height:35.5px;border:3px solid #e8353f;border-radius:4px;box-sizing:border-box;box-shadow:1px 2px 3px rgba(0,0,0,.3);"></div>
<div class="b" style="left:1362.9px;top:835px;width:215.5px;height:75px;border:3px solid #e8353f;border-radius:4px;box-sizing:border-box;box-shadow:1px 2px 3px rgba(0,0,0,.3);"></div>
<div class="b" style="left:1304.7px;top:499.4px;width:43.2px;height:43.2px;border-radius:50%;background:#e8353f;box-shadow:1px 2px 3px rgba(0,0,0,.4)"></div>
<span class="t" style="left:1318.08px;top:502.00px;height:39px;line-height:39px;font-size:30px;color:#fff;transform:scaleX(0.9850);text-shadow:1px 1px 1px rgba(0,0,0,.35);">1</span>
<div class="b" style="left:1307.8px;top:759.8px;width:43.2px;height:43.2px;border-radius:50%;background:#e8353f;box-shadow:1px 2px 3px rgba(0,0,0,.4)"></div>
<span class="t" style="left:1321.18px;top:762.40px;height:39px;line-height:39px;font-size:30px;color:#fff;transform:scaleX(0.9850);text-shadow:1px 1px 1px rgba(0,0,0,.35);">2</span>
<div class="b" style="left:1307.8px;top:834.4px;width:43.2px;height:43.2px;border-radius:50%;background:#e8353f;box-shadow:1px 2px 3px rgba(0,0,0,.4)"></div>
<span class="t" style="left:1321.18px;top:837.00px;height:39px;line-height:39px;font-size:30px;color:#fff;transform:scaleX(0.9850);text-shadow:1px 1px 1px rgba(0,0,0,.35);">3</span>
<svg class="b" style="left:0;top:0" width="1920" height="1149" viewBox="0 0 1920 1149" fill="none" stroke="#111" stroke-width="1.3"><g stroke="#fff" stroke-width="1.1"><path d="M1769 20.5H1781.5"/><path d="M1829.5 17.5H1836.5V24.5H1829.5Z M1831.5 17.5V15.5H1838.5V22.5H1836.5"/><path d="M1885 14.5L1896 25.5M1896 14.5L1885 25.5" stroke-width="1.3"/></g><g stroke="#8a8a8a" stroke-width="1.3"><circle cx="1849.5" cy="58" r="4.8"/><path d="M1853 61.5L1857.5 66"/></g><path d="M70 102.5L74.6 107.2L79.2 102.5" stroke="#fff" stroke-width="1.3"/><path d="M113.8 95.8H108.3L98.9 105.8V127.7H126.5V108.4M108.3 95.8V105.8H98.9"/><path d="M120.4 95.8H133.4M126.9 89.3V102.3" stroke="#f26f21" stroke-width="1.3"/><path d="M165.6 95.8H183.3V127.2H156.2V105.8ZM165.6 95.8V105.8H156.2"/><path d="M171.3 89.8H188.6V122.2" stroke="#f26f21"/><path d="M215 96.4H237.7A15.65 15.65 0 0 1 237.7 127.7H215.5M220 91L214.6 96.4L220 101.8"/><path d="M313 95.8H290.2A15.95 15.95 0 0 0 290.2 127.7H311.7M308 90.4L313.4 95.8L308 101.2" stroke="#c6c6c6"/><path d="M364.3 89.8V119M358.8 113.5L364.3 119L369.8 113.5" stroke="#f26f21"/><path d="M344.3 120.5V128H383.7V120.5"/><path d="M424.5 125L439.5 90.5H448.5L463.5 125H455L452.3 118.3H435.7L433 125ZM438.6 111.2L444 97.8L449.4 111.2Z"/><path d="M501.4 99.3V122M540.4 99.3V122M502 101.9H540M507.5 96.4L502 101.9L507.5 107.4M534.5 96.4L540 101.9L534.5 107.4"/><rect x="609.8" y="88.6" width="26.8" height="38.8" rx="5.5" stroke-width="1.5"/><g fill="#111" stroke="none"><circle cx="615.5" cy="94.2" r="1.1"/><circle cx="630.6" cy="94.2" r="1.1"/><circle cx="615.5" cy="121.6" r="2.6"/><circle cx="630.6" cy="121.6" r="2.6"/></g><path d="M694.2 88.3V127.5M686.2 119.8H726"/><path d="M757.2 95.8H737.3V127.9H770.6V108.4M737.6 127.5L748 116.1L755 121.6L764.8 112.4L770.6 118.3"/><circle cx="752.8" cy="105.8" r="2.2" fill="#111" stroke="none"/><path d="M763.8 95.8H776.8M770.3 89.3V102.3" stroke="#f26f21" stroke-width="1.3"/><path d="M786.3 95.8H819.8V127.9H786.3ZM786.6 127.5L797 116.1L804.2 121.6L814.1 112.4L819.8 118.3M791.1 89.8H825.7V123.1"/><circle cx="801.6" cy="105.8" r="2.2" fill="#111" stroke="none"/><path d="M903.2 105.5 L903.2 112.3 L898.3 112.4 L896.5 116.6 L899.9 120.2 L895.2 124.9 L891.6 121.5 L887.4 123.3 L887.3 128.2 L880.5 128.2 L880.4 123.3 L876.2 121.5 L872.6 124.9 L867.9 120.2 L871.3 116.6 L869.5 112.4 L864.6 112.3 L864.6 105.5 L869.5 105.4 L871.3 101.2 L867.9 97.6 L872.6 92.9 L876.2 96.3 L880.4 94.5 L880.5 89.6 L887.3 89.6 L887.4 94.5 L891.6 96.3 L895.2 92.9 L899.9 97.6 L896.5 101.2 L898.3 105.4Z" stroke-linejoin="round"/><path d="M878.5 103.5L872.8 108.9L878.5 114.3M889.3 103.5L895 108.9L889.3 114.3M886.5 99.5L881.3 118.3"/><rect x="952.5" y="89.4" width="39.2" height="39" stroke="#c6c6c6"/><g stroke="#f7c6a5" stroke-width="1.2"><path d="M955.5 99.8H967.5M961.5 93.8V105.8M976.5 99.8H988.5M957 113.5L966 122.5M966 113.5L957 122.5M976.5 118.5H988.5"/></g><g fill="#f7c6a5" stroke="none"><circle cx="982.5" cy="113.5" r="1"/><circle cx="982.5" cy="123.5" r="1"/></g><path d="M1030.3 89.2V128.6M1038 89.2V128.6M1038 108.4H1058M1038 113.3H1058"/><g stroke="#f26f21"><circle cx="1062" cy="94.9" r="4.4"/><path d="M1065.1 98L1069.5 102.4"/></g><path d="M1098.6 89.2V128.6M1106.3 89.2V128.6M1106.3 108.4H1126M1106.3 113.3H1126"/><path d="M1132.5 101.9V90M1127.5 95L1132.5 90L1137.5 95" stroke="#f26f21"/><path d="M1158.1 92V110.2M1163.1 92V110.2M1163.1 101.9H1173M1163.1 105.8H1173"/><path d="M1170.5 98.5L1172 94.5L1176 91.5L1177.8 93.5L1174.5 97.2Z" stroke="#f26f21" stroke-width="1.1"/><path d="M1168 122V135.6M1163.5 131.2L1168 135.6L1172.5 131.2" stroke="#f26f21"/><path d="M1157.8 136.4V140.2H1176.7V136.4"/><path d="M1168 166.2V152.4M1163.5 156.8L1168 152.4L1172.5 156.8" stroke="#f26f21"/><path d="M1157.8 166.6V170.1H1176.7V166.6"/><path d="M1287.6 113.3H1306.9V128.1H1287.6ZM1287.6 113.3L1267.5 102.5V116.1L1287.6 128.1M1267.5 102.5H1286.8L1306.9 113.3" stroke-width="1.6" stroke-linejoin="round"/><path d="M1293.8 95.8H1306.8M1300.3 89.3V102.3" stroke="#f26f21" stroke-width="1.3"/><path d="M1342.3 113.3L1328.2 105.5V118.7L1342.3 128.1M1328.2 105.5H1347.5L1361.6 113.3" stroke="#c6c6c6" stroke-linejoin="round"/><path d="M1342.3 113.3H1361.6V128.1H1342.3Z" stroke="#f7c6a5"/><path d="M1354.6 95.8H1367.6M1361.1 89.3V102.3" stroke="#f7c6a5" stroke-width="1.3"/><path d="M1398.8 95.3V127.7M1409 95.3V127.7M1419.5 105.8V127.7M1390 128.1H1429.8M1394 121.6L1398.8 127.7L1403.8 121.6L1409 127.7L1414.1 121.6L1419.5 127.7L1424.4 121.6"/><path d="M1416.8 95.8H1429.8M1423.3 89.3V102.3" stroke="#f26f21" stroke-width="1.3"/><path d="M1481.9 95.8H1462.4L1473.1 111.7L1462.4 128.1H1481.9" stroke-width="1.4"/><path d="M1488.5 95.8H1501.5M1495 89.3V102.3" stroke="#f26f21" stroke-width="1.3"/><path d="M1567 89.9H1552.5A5 5 0 0 0 1547.5 94.9V123A5 5 0 0 0 1552.5 128H1569A5 5 0 0 0 1574 123V104" stroke-width="1.6"/><g fill="#111" stroke="none"><circle cx="1553.2" cy="95.3" r="1.1"/><circle cx="1568.3" cy="95.3" r="1.1"/><circle cx="1553.2" cy="122.7" r="2.6"/><circle cx="1568.3" cy="122.7" r="2.6"/></g><path d="M1573.8 95.8H1586.8M1580.3 89.3V102.3" stroke="#f26f21" stroke-width="1.3"/><path d="M1635 89.5H1620.5L1612.3 98V128H1646.3V108M1620.5 89.5V98H1612.3" stroke="#c6c6c6"/><text x="1629.3" y="119.3" font-family="Liberation Sans, sans-serif" font-size="14.5" fill="#c6c6c6" stroke="none" text-anchor="middle" textLength="26" lengthAdjust="spacingAndGlyphs">DXF</text><path d="M1646.4 89.5V101M1642 96.6L1646.4 101L1650.8 96.6" stroke="#f7c6a5"/><path d="M1011.5 211.9V226.5H1026M1007.5 216H1022V230.6" stroke-width="1.5"/><path d="M1038.5 219L1042.8 223.3L1047.1 219"/><path d="M1067.2 214.6H1074V220M1074 214.6C1069.5 218 1065.2 221 1064.8 225C1064.6 228.5 1067.5 230.2 1071.2 229.2M1078.3 213.2C1081.2 212.8 1083 215 1082.5 218.2C1081.8 221.5 1078.5 224.5 1075.1 227.6M1075.1 222V227.7H1080.9" stroke-width="1.4"/><path d="M1094.6 219L1098.9 223.3L1103.2 219"/><path d="M1120 217.5H1134.5V230.5H1120ZM1120 217.5L1125.5 212H1139.8L1134.5 217.5M1139.8 212V225L1134.5 230.5M1125.5 212V225H1139.8M1125.5 225L1120 230.5" stroke-width="1.2"/><path d="M1154 217.5H1168.5V230.5H1154ZM1155.5 216L1159.5 212H1173.8L1169.9 216ZM1170 217.8L1174 213.6V226.2L1170 230.3Z" fill="#000" stroke="none"/><path d="M1191.1 217.3V224.4L1197.1 227.9L1209.7 221.8V214.6L1191.1 217.3L1197.1 220.3L1209.7 214.6M1197.1 220.3V227.9" stroke-width="1.7" stroke-linejoin="round"/><path d="M1224.2 222L1233.3 213.3L1242.4 222M1227 220V229.5H1231.2V223.5H1235.4V229.5H1239.6V220" stroke-width="1.2"/><path d="M1256 216.5V212H1260.5M1256 212L1261.5 217.5M1271.5 212H1276V216.5M1276 212L1270.5 217.5M1256 226V230.5H1260.5M1256 230.5L1261.5 225M1271.5 230.5H1276V226M1276 230.5L1270.5 225" stroke-width="1.2"/><path d="M1168 297.6A47.5 25.5 0 1 0 1263 298A47.5 25.5 0 1 0 1168 297.6ZM1179.5 296A36 19 0 1 1 1251.5 296A36 19 0 1 1 1179.5 296Z" fill="#e3e3e3" stroke="none" fill-rule="evenodd"/><path d="M1208.5 242.5L1245.2 250.2L1241.8 287.1L1224.2 310.1L1186.8 295.3L1182 257Z" fill="#b1b1b1" stroke="#828282" stroke-width="0.9"/><path d="M1182 257L1226.1 267L1245.2 250.2M1226.1 267L1224.2 310.1M1208.5 242.5L1208.8 276.6L1186.8 295.3M1208.8 276.6L1241.8 287.1" stroke="#828282" stroke-width="0.9"/><path d="M1181 320.5L1188.5 315L1187 310.5M1188.5 315L1195.5 312.5" stroke="#8c8c8c" stroke-width="2.6"/><path d="M1172 278L1184 277M1179.5 274.5L1182 280" stroke="#9a9a9a" stroke-width="1.2"/><path d="M1251 302.5L1264 305.5M1261 302.8L1264.5 305.6L1261 307" stroke="#aaa" stroke-width="0.9"/><text x="1200" y="289" font-family="Liberation Sans, sans-serif" font-size="8" fill="#fff" stroke="none">+Y</text><text x="1235" y="283" font-family="Liberation Sans, sans-serif" font-size="7" fill="#fff" stroke="none">)</text><text x="1211" y="257" font-family="Liberation Sans, sans-serif" font-size="6" fill="#fff" stroke="none">-Z</text><path d="M1061.5 383.2L1068.7 383.2L1068.7 376Z" fill="#444" stroke="none"/><path d="M1086.5 411.1L1093.7 411.1L1093.7 403.9Z" fill="#444" stroke="none"/><path d="M1086.5 467.1L1093.7 467.1L1093.7 459.9Z" fill="#444" stroke="none"/><path d="M1086.5 523.1L1093.7 523.1L1093.7 515.9Z" fill="#444" stroke="none"/><path d="M1086.5 691.3L1093.7 691.3L1093.7 684.1Z" fill="#444" stroke="none"/><path d="M1111.5 719.1L1118.7 719.1L1118.7 711.9Z" fill="#444" stroke="none"/><path d="M1086.5 803.5L1093.7 803.5L1093.7 796.3Z" fill="#444" stroke="none"/><path d="M1111.5 831L1118.7 831L1118.7 823.8Z" fill="#444" stroke="none"/><path d="M1137 855.5L1140.5 860L1148.5 848" stroke="#ff8a00" stroke-width="2.2" fill="none"/><path d="M1137 883.3L1140.5 887.8L1148.5 875.8" stroke="#ff8a00" stroke-width="2.2" fill="none"/><path d="M1137 911.3L1140.5 915.8L1148.5 903.8" stroke="#ff8a00" stroke-width="2.2" fill="none"/><path d="M1137 939.1L1140.5 943.6L1148.5 931.6" stroke="#ff8a00" stroke-width="2.2" fill="none"/><path d="M60.2 1036V1016.5H56L61.5 997L67 1016.5H62.8V1036Z" fill="#0a0aff" stroke="none"/><path d="M63 1036L72.5 1028L70.5 1025.5L85.5 1017.5L79 1033L76.5 1030.5L66 1038.5Z" fill="#0b7a0b" stroke="none"/><path d="M64 1037L87 1043L88 1039.5L103 1050.5L84 1050.5L85.5 1047L63 1041Z" fill="#ff1414" stroke="none"/><circle cx="61.2" cy="1038.8" r="5.4" fill="#777" stroke="none"/><circle cx="59.8" cy="1037.3" r="2.2" fill="#a5a5a5" stroke="none"/><path d="M1314.8 261.3L1319.8 266.3L1324.8 261.3" stroke="#f26f21" stroke-width="1.3" fill="none"/><path d="M1885.8 291.4L1891 296.6L1896.2 291.4" stroke="#222" stroke-width="1.3" fill="none"/><path d="M1315.5 337.5L1320.5 342.5L1325.5 337.5" stroke="#f26f21" stroke-width="1.3" fill="none"/><path d="M1340.6 368.7H1354M1347.3 362V375.4" stroke-width="1.4"/><path d="M1370.5 362.5H1379.2V378H1364.5V368.5ZM1370.5 362.5V368.5H1364.5" stroke-width="1.3"/><path d="M1373.5 359.6H1381.7V374.5" stroke="#f26f21" stroke-width="1.2"/><path d="M1388.6 363.5H1407.4M1394.5 363.5V360H1401.5V363.5M1390.8 363.5V378H1405.2V363.5M1395.3 367V374.5M1400.7 367V374.5" stroke-width="1.3"/><path d="M1414 363.5H1421M1420 363.5V360H1423M1416.3 363.5V378H1430.7V369M1420.8 367V374.5M1426.2 370V374.5" stroke-width="1.3"/><path d="M1425 359.8H1433.2M1425 362.5H1433.2M1425 365.2H1433.2" stroke="#f26f21" stroke-width="1.1"/><path d="M1436.7 404H1447.1L1443.1 408.5V414H1440.7V408.5Z" fill="#333" stroke="none"/><path d="M1561.3 404H1571.7L1567.7 408.5V414H1565.3V408.5Z" fill="#333" stroke="none"/><path d="M1356.2 486.5L1361.2 491.5L1366.2 486.5" stroke="#f26f21" stroke-width="1.3" fill="none"/><path d="M1872 517.1L1877.2 522.3L1882.4 517.1" stroke="#222" stroke-width="1.3" fill="none"/><path d="M1356.2 748L1361.2 753L1366.2 748" stroke="#f26f21" stroke-width="1.3" fill="none"/><path d="M1872 778.6L1877.2 783.8L1882.4 778.6" stroke="#222" stroke-width="1.3" fill="none"/><path d="M1356.2 823.2L1361.2 828.2L1366.2 823.2" stroke="#f26f21" stroke-width="1.3" fill="none"/><path d="M1380.5 1028.5V1044.3L1384.2 1041L1386.8 1047L1389 1046L1386.4 1040.2H1391.3Z" fill="#fff" stroke="#222" stroke-width="0.9" stroke-linejoin="round"/></svg>
<div class="b" style="left:1104.2px;top:745px;width:166.7px;height:49px;background:#fff;border:3px solid #e8353f;border-radius:4px;box-sizing:border-box;box-shadow:1px 2px 3px rgba(0,0,0,.35)"></div>
<svg class="b" style="left:0;top:0" width="1920" height="1149"><path d="M1126.8 757.1H1240.9L1259 770.3L1240.9 783.5H1126.8Z" fill="#f26f21"/></svg>
<span class="t" style="left:1133.00px;top:759.40px;height:20px;line-height:20px;font-size:15px;color:#fff;transform:scaleX(0.8541);">LC2</span>
<div class="b" style="left:0px;top:79px;width:1px;height:1020px;background:#000;"></div>
<div class="b" style="left:1919px;top:79px;width:1px;height:1020px;background:#000;"></div>
</body></html>
